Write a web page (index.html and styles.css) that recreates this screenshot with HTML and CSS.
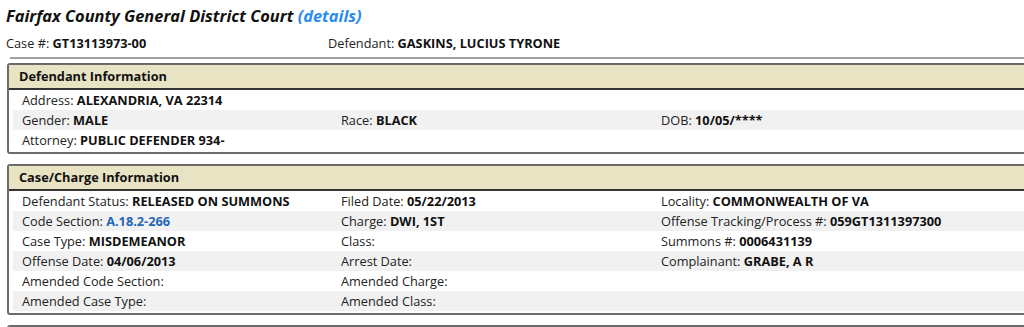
FILE: index.html
```html
<!DOCTYPE html>
<html lang="en">
<head>
  <meta charset="UTF-8">
  <title>Case Details</title>
  <link rel="stylesheet" href="styles.css">
</head>
<body>

<h1 class="court-title">Fairfax County General District Court <a href="#" class="details-link">(details)</a></h1>

<div class="case-summary">
  <div class="summary-item">Case #: <b>GT13113973-00</b></div>
  <div class="summary-item">Defendant: <b>GASKINS, LUCIUS TYRONE</b></div>
</div>

<hr class="divider">

<div class="info-box">
  <div class="info-header">Defendant Information</div>
  <div class="info-rows">
    <div class="info-row">
      <div class="cell">Address: <b>ALEXANDRIA, VA 22314</b></div>
      <div class="cell"></div>
      <div class="cell"></div>
    </div>
    <div class="info-row">
      <div class="cell">Gender: <b>MALE</b></div>
      <div class="cell">Race: <b>BLACK</b></div>
      <div class="cell">DOB: <b>10/05/****</b></div>
    </div>
    <div class="info-row">
      <div class="cell">Attorney: <b>PUBLIC DEFENDER 934-</b></div>
      <div class="cell"></div>
      <div class="cell"></div>
    </div>
  </div>
</div>

<div class="info-box">
  <div class="info-header">Case/Charge Information</div>
  <div class="info-rows">
    <div class="info-row">
      <div class="cell">Defendant Status: <b>RELEASED ON SUMMONS</b></div>
      <div class="cell">Filed Date: <b>05/22/2013</b></div>
      <div class="cell">Locality: <b>COMMONWEALTH OF VA</b></div>
    </div>
    <div class="info-row">
      <div class="cell">Code Section: <a href="#" class="code-link">A.18.2-266</a></div>
      <div class="cell">Charge: <b>DWI, 1ST</b></div>
      <div class="cell">Offense Tracking/Process #: <b>059GT1311397300</b></div>
    </div>
    <div class="info-row">
      <div class="cell">Case Type: <b>MISDEMEANOR</b></div>
      <div class="cell">Class:</div>
      <div class="cell">Summons #: <b>0006431139</b></div>
    </div>
    <div class="info-row">
      <div class="cell">Offense Date: <b>04/06/2013</b></div>
      <div class="cell">Arrest Date:</div>
      <div class="cell">Complainant: <b>GRABE, A R</b></div>
    </div>
    <div class="info-row">
      <div class="cell">Amended Code Section:</div>
      <div class="cell">Amended Charge:</div>
      <div class="cell"></div>
    </div>
    <div class="info-row">
      <div class="cell">Amended Case Type:</div>
      <div class="cell">Amended Class:</div>
      <div class="cell"></div>
    </div>
  </div>
</div>

<div class="info-box info-box-last"></div>

</body>
</html>
```

FILE: styles.css
```css
html {
  overflow: hidden;
}

body {
  margin: 0;
  padding: 6px 0 0 6px;
  font-family: 'Open Sans', 'DejaVu Sans', sans-serif;
  font-size: 12.75px;
  color: #222;
  width: 1060px;
}

b {
  color: #111;
}

.court-title {
  margin: 0;
  font-size: 16.4px;
  font-style: italic;
  font-weight: bold;
  line-height: 20px;
  color: #111;
}

.details-link {
  color: #2a8cf0;
  text-decoration: none;
}

.case-summary {
  display: flex;
  margin-top: 7px;
  line-height: 20px;
}

.summary-item {
  width: 322px;
}

.divider {
  margin: 4px 0 0 4px;
  border: none;
  border-top: 2px solid #a0a0a0;
}

.info-box {
  margin: 4px 0 10px 1px;
  border: 2px solid #6b6b6b;
  border-radius: 3px;
  padding-bottom: 2px;
}

.info-header {
  background-color: #e8e3c3;
  border-bottom: 2px solid #333;
  padding: 0 10px;
  height: 23px;
  line-height: 23px;
  font-weight: bold;
  color: #111;
}

.info-box + .info-box {
  margin-top: 0;
}

.info-box-last {
  height: 30px;
  background-color: #e8e3c3;
}

.info-rows {
  padding: 0 4px;
}

.info-row {
  display: grid;
  grid-template-columns: 319px 320px 1fr;
  height: 20px;
  line-height: 20px;
}

.info-row:nth-child(even) {
  background-color: #f1f1f1;
}

.cell {
  padding-left: 9px;
  white-space: nowrap;
}

.code-link {
  color: #1f66b8;
  font-weight: bold;
  text-decoration: none;
}
```
